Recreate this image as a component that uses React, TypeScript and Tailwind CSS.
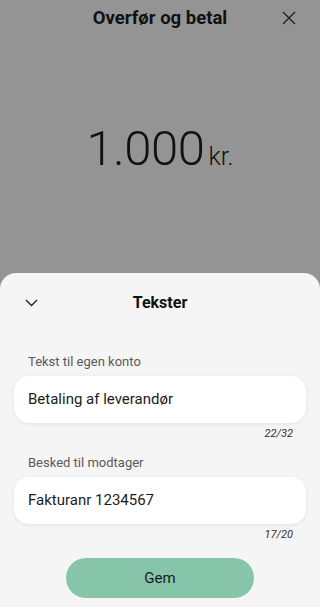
import React from 'react';

const Field = ({ label, value, count }: { label: string; value: string; count: string }) => (
  <div className="flex flex-col">
    <div className="px-[28px] text-[13px] leading-[16px] text-[#5a5a5a]">{label}</div>
    <div className="mt-[6px] mx-[14px] h-[47px] rounded-[15px] bg-white shadow-[0_1px_4px_rgba(0,0,0,0.08)] flex items-center px-[14px] text-[15px] text-[#1c1c1c]">
      {value}
    </div>
    <div className="mt-[4px] pr-[27px] text-right text-[11px] leading-[14px] italic text-[#333]">{count}</div>
  </div>
);

export default function App() {
  return (
    <div
      className="w-[320px] h-[607px] bg-[#949494] flex flex-col overflow-hidden"
      style={{ fontFamily: 'Roboto, "Noto Sans", sans-serif' }}
    >
      {/* header */}
      <div className="relative h-[38px] flex items-center justify-center">
        <span className="text-[18.5px] font-bold text-[#111]">Overfør og betal</span>
        <svg className="absolute right-[24px] top-[11px]" width="14" height="14" viewBox="0 0 14 14">
          <path d="M1 1 L13 13 M13 1 L1 13" stroke="#222" strokeWidth="1.4" fill="none" />
        </svg>
      </div>

      {/* amount */}
      <div className="h-[235px] flex justify-center pt-[83px]">
        <div className="flex items-baseline text-[#111]">
          <span className="text-[49px] font-light leading-[56px] tracking-[-0.5px]">1.000</span>
          <span className="ml-[4px] text-[25px] font-light">kr.</span>
        </div>
      </div>

      {/* sheet */}
      <div className="flex-1 bg-[#f5f5f5] rounded-t-[16px] flex flex-col">
        <div className="relative h-[60px] flex items-center justify-center">
          <svg className="absolute left-[25px] top-[26px]" width="13" height="8" viewBox="0 0 13 8">
            <path d="M1 1 L6.5 6.5 L12 1" stroke="#222" strokeWidth="1.4" fill="none" />
          </svg>
          <span className="text-[16px] font-bold text-[#111]">Tekster</span>
        </div>
        <div className="mt-[21px]">
          <Field label="Tekst til egen konto" value="Betaling af leverandør" count="22/32" />
        </div>
        <div className="mt-[14px]">
          <Field label="Besked til modtager" value="Fakturanr 1234567" count="17/20" />
        </div>
        <div className="mt-[16px] flex justify-center">
          <button className="w-[188px] h-[40px] rounded-full bg-[#86c5a9] text-[15px] text-[#1c1c1c]">Gem</button>
        </div>
      </div>
    </div>
  );
}
